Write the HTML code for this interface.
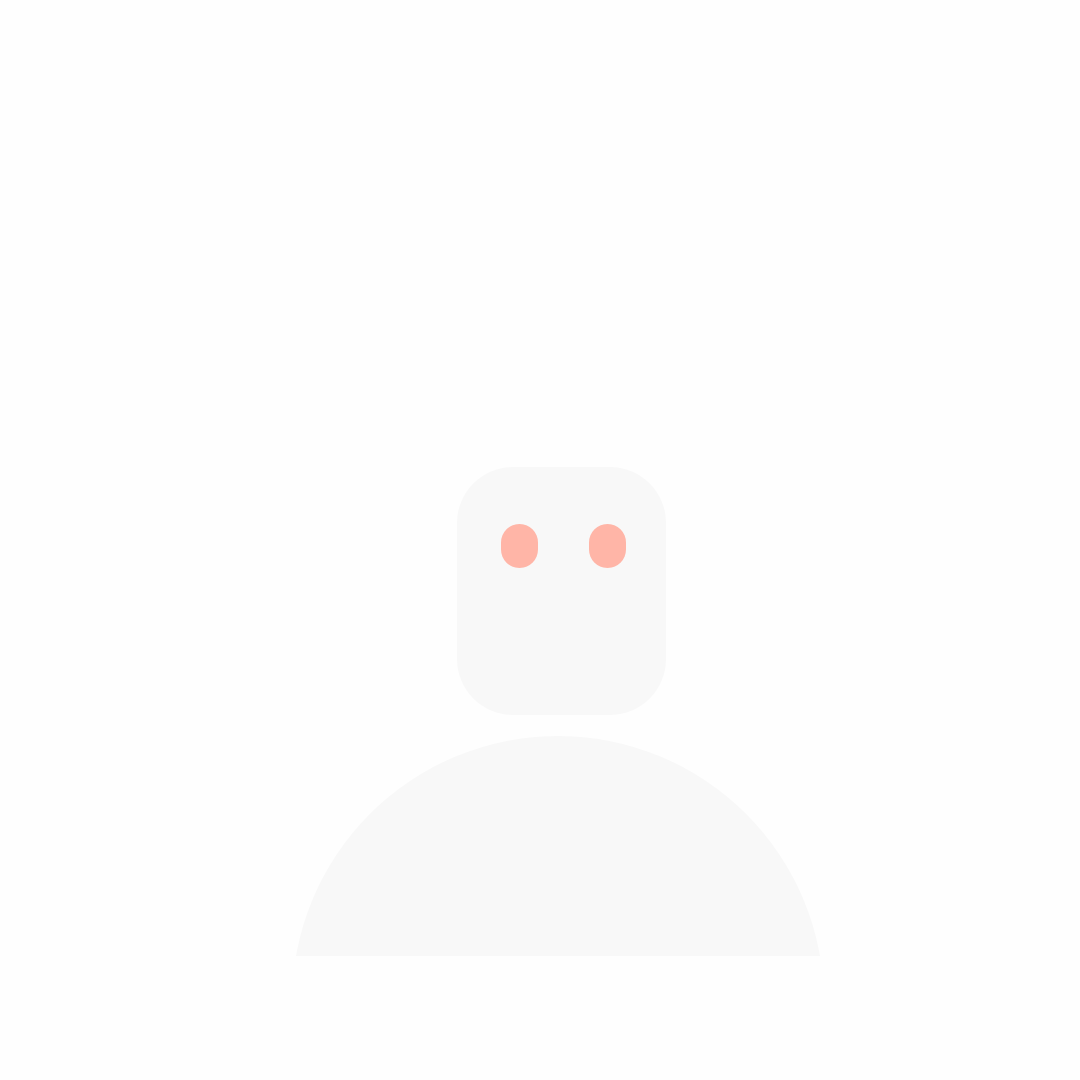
<!DOCTYPE html>
<html><head><style>
html,body{margin:0;padding:0;background:#fefefe;width:1080px;height:1080px;overflow:hidden}
svg{display:block;position:absolute;left:0;top:0}
</style></head><body>
<svg width="1080" height="1080" viewBox="0 0 1080 1080" xmlns="http://www.w3.org/2000/svg">
<rect width="1080" height="1080" fill="#fefefe"/>
<rect x="457" y="467" width="209" height="248" rx="56" fill="#f8f8f8"/>
<rect x="501" y="524" width="37" height="44" rx="18.5" fill="#ffb5a7"/>
<rect x="589" y="524" width="37" height="44" rx="18.5" fill="#ffb5a7"/>
<clipPath id="c"><rect x="0" y="0" width="1080" height="956"/></clipPath>
<circle cx="558" cy="1002" r="266" fill="#f8f8f8" clip-path="url(#c)"/>
</svg>
</body></html>
